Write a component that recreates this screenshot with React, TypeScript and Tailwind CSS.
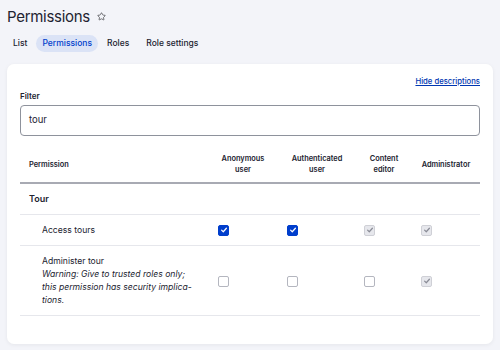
import { Star } from 'lucide-react';

type Box = 'on' | 'off' | 'locked';

const ROLES = [
  { label: ['Anonymous', 'user'], w: 'w-[50px]' },
  { label: ['Authenticated', 'user'], w: 'w-[60px]' },
  { label: ['Content', 'editor'], w: 'w-[40px]' },
  { label: ['Administrator'], w: 'w-[50px]' },
];

const ROWS: { title: string; warning?: string[]; boxes: Box[] }[] = [
  { title: 'Access tours', boxes: ['on', 'on', 'locked', 'locked'] },
  {
    title: 'Administer tour',
    warning: ['Warning: Give to trusted roles only;', 'this permission has security implica-', 'tions.'],
    boxes: ['off', 'off', 'off', 'locked'],
  },
];

const GRID = 'grid grid-cols-[190px_69px_77px_57px_67px]';

function Check({ state }: { state: Box }) {
  if (state === 'off') {
    return <span className="block h-[11px] w-[11px] rounded-[2px] border border-[#b4b6bf] bg-white" />;
  }
  const on = state === 'on';
  return (
    <span
      className={[
        'flex h-[11px] w-[11px] items-center justify-center rounded-[2px] border',
        on ? 'border-[#003ecc] bg-[#003ecc]' : 'border-[#cfd0d6] bg-[#e6e7ec]',
      ].join(' ')}
    >
      <svg viewBox="0 0 10 10" className="h-[8px] w-[8px]">
        <path
          d="M2 5.2 L4.1 7.2 L8 2.8"
          fill="none"
          stroke={on ? '#ffffff' : '#8a8c96'}
          strokeWidth="1.5"
          strokeLinecap="round"
          strokeLinejoin="round"
        />
      </svg>
    </span>
  );
}

export default function App() {
  return (
    <div className="h-[350px] w-[500px] overflow-hidden bg-[#f3f4f9] font-['Inter',sans-serif] text-[#222330]">
      <div className="flex h-[29px] items-center gap-[7px] pl-[7px] pt-[4px]">
        <h1 className="text-[15px] font-normal leading-[24px] tracking-[-0.02em]">Permissions</h1>
        <Star className="h-[9px] w-[9px] text-[#55565b]" strokeWidth={2.2} />
      </div>

      <nav className="mt-[6px] flex h-[17px] items-center gap-[1px] pl-[5px] text-[8.5px] font-medium leading-[9px]">
        <span className="flex h-[17px] items-center px-[8px]">List</span>
        <span className="flex h-[17px] items-center rounded-full bg-[#dbe3f6] px-[6px] text-[#003ecc]">Permissions</span>
        <span className="flex h-[17px] items-center px-[8px]">Roles</span>
        <span className="flex h-[17px] items-center px-[8px]">Role settings</span>
      </nav>

      <div className="mx-[7px] mt-[12px] rounded-[7px] bg-white px-[13px] pb-[28px] pt-[13px] shadow-[0_1px_4px_rgba(0,0,0,0.06)]">
        <div className="flex justify-end">
          <a className="text-[7.7px] font-medium leading-[10px] text-[#0036b1] underline">Hide descriptions</a>
        </div>

        <label className="mt-[4px] block text-[8px] font-semibold leading-[10px]">Filter</label>
        <div className="mt-[4px] flex h-[31px] w-[460px] items-center rounded-[4px] border border-[#8e929c] px-[8px] text-[9.5px]">
          tour
        </div>

        <div className="mt-[10px] w-[460px]">
          <div className={`${GRID} h-[38px] items-center border-b-2 border-[#a8aab3] text-[7.4px] font-semibold leading-[11px]`}>
            <span className="pl-[9px]">Permission</span>
            {ROLES.map((r) => (
              <span key={r.label[0]} className="pl-[8px]">
                <span className={`block ${r.w} whitespace-nowrap text-center`}>
                  {r.label.map((l) => (
                    <span key={l} className="block">
                      {l}
                    </span>
                  ))}
                </span>
              </span>
            ))}
          </div>

          <div className="flex h-[31px] items-center border-b border-[#e6e7ec] pl-[9px] text-[9px] font-semibold">
            Tour
          </div>

          {ROWS.map((row) => (
            <div
              key={row.title}
              className={`${GRID} items-center border-b border-[#e6e7ec] ${row.warning ? 'pb-[8px] pt-[9px]' : 'h-[31px]'}`}
            >
              <div className="pl-[22px] text-[8.6px] leading-[13px]">
                <div>{row.title}</div>
                {row.warning &&
                  row.warning.map((w) => (
                    <div key={w} className="italic">
                      {w}
                    </div>
                  ))}
              </div>
              {row.boxes.map((b, i) => (
                <div key={i} className="pl-[8px]">
                  <Check state={b} />
                </div>
              ))}
            </div>
          ))}
        </div>
      </div>
    </div>
  );
}
